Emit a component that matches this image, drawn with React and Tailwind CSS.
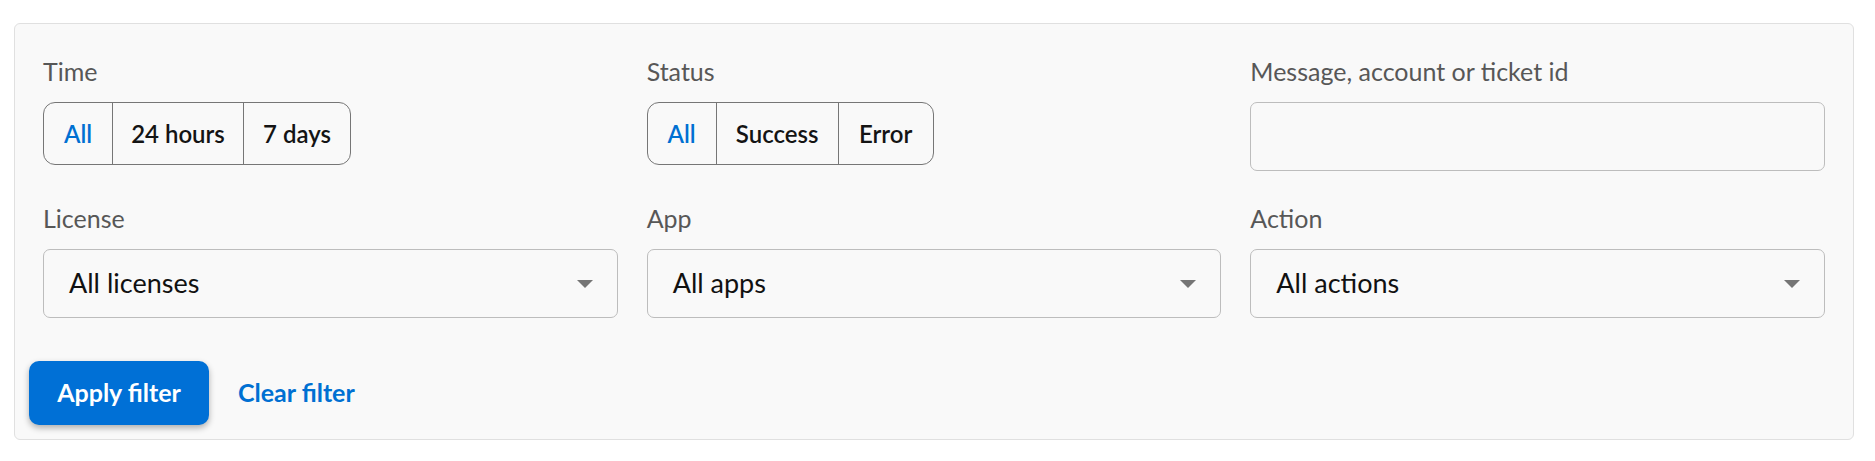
import React from 'react';

const font = { fontFamily: 'Lato, "Noto Sans", sans-serif' };

function Segmented({ items }) {
    return (
        <div className="flex h-[63px] w-fit rounded-[12px] border border-[#767676] overflow-hidden">
            {items.map((it, i) => (
                <button
                    key={it.label}
                    className={
                        'flex items-center justify-center text-[24px] font-semibold ' +
                        it.w +
                        (i > 0 ? ' border-l border-[#767676]' : '') +
                        (it.active ? ' text-[#0070d2]' : ' text-[#141414]')
                    }
                >
                    {it.label}
                </button>
            ))}
        </div>
    );
}

function Select({ value }) {
    return (
        <div className="flex h-[69px] items-center justify-between rounded-[7px] border border-[#bdbdbd] pl-[25px] pr-[24px]">
            <span className="text-[27px] text-[#111]">{value}</span>
            <svg width="16" height="8" viewBox="0 0 16 8">
                <path d="M0 0h16L8 8z" fill="#757575" />
            </svg>
        </div>
    );
}

function Label({ children }) {
    return <div className="mb-[17px] text-[25px] leading-[28px] text-[#575757]">{children}</div>;
}

export default function App() {
    return (
        <div className="min-h-[461px] bg-white pt-[23px] pl-[14px]" style={font}>
            <div className="flex h-[417px] w-[1840px] flex-col rounded-[6px] border border-[#e0e0e0] bg-[#f9f9f9] px-[28px] pt-[33px] pb-[14px]">
                {/* Fields */}
                <div className="grid grid-cols-3 gap-x-[29px] gap-y-[33px]">
                    <div>
                        <Label>Time</Label>
                        <Segmented
                            items={[
                                { label: 'All', w: 'w-[68px]', active: true },
                                { label: '24 hours', w: 'w-[131px]' },
                                { label: '7 days', w: 'w-[107px]' },
                            ]}
                        />
                    </div>
                    <div>
                        <Label>Status</Label>
                        <Segmented
                            items={[
                                { label: 'All', w: 'w-[68px]', active: true },
                                { label: 'Success', w: 'w-[122px]' },
                                { label: 'Error', w: 'w-[95px]' },
                            ]}
                        />
                    </div>
                    <div>
                        <Label>Message, account or ticket id</Label>
                        <input className="h-[69px] w-full rounded-[7px] border border-[#bdbdbd] bg-transparent px-[20px] text-[25px] outline-none" />
                    </div>
                    <div>
                        <Label>License</Label>
                        <Select value="All licenses" />
                    </div>
                    <div>
                        <Label>App</Label>
                        <Select value="All apps" />
                    </div>
                    <div>
                        <Label>Action</Label>
                        <Select value="All actions" />
                    </div>
                </div>

                {/* Actions */}
                <div className="-ml-[14px] mt-auto flex items-center gap-[29px]">
                    <button className="h-[64px] w-[180px] rounded-[10px] bg-[#0070d6] text-[25px] font-bold text-white shadow-[0_3px_6px_rgba(0,0,0,0.3)]">
                        Apply filter
                    </button>
                    <button className="text-[25px] font-bold text-[#0070d2]">Clear filter</button>
                </div>
            </div>
        </div>
    );
}
